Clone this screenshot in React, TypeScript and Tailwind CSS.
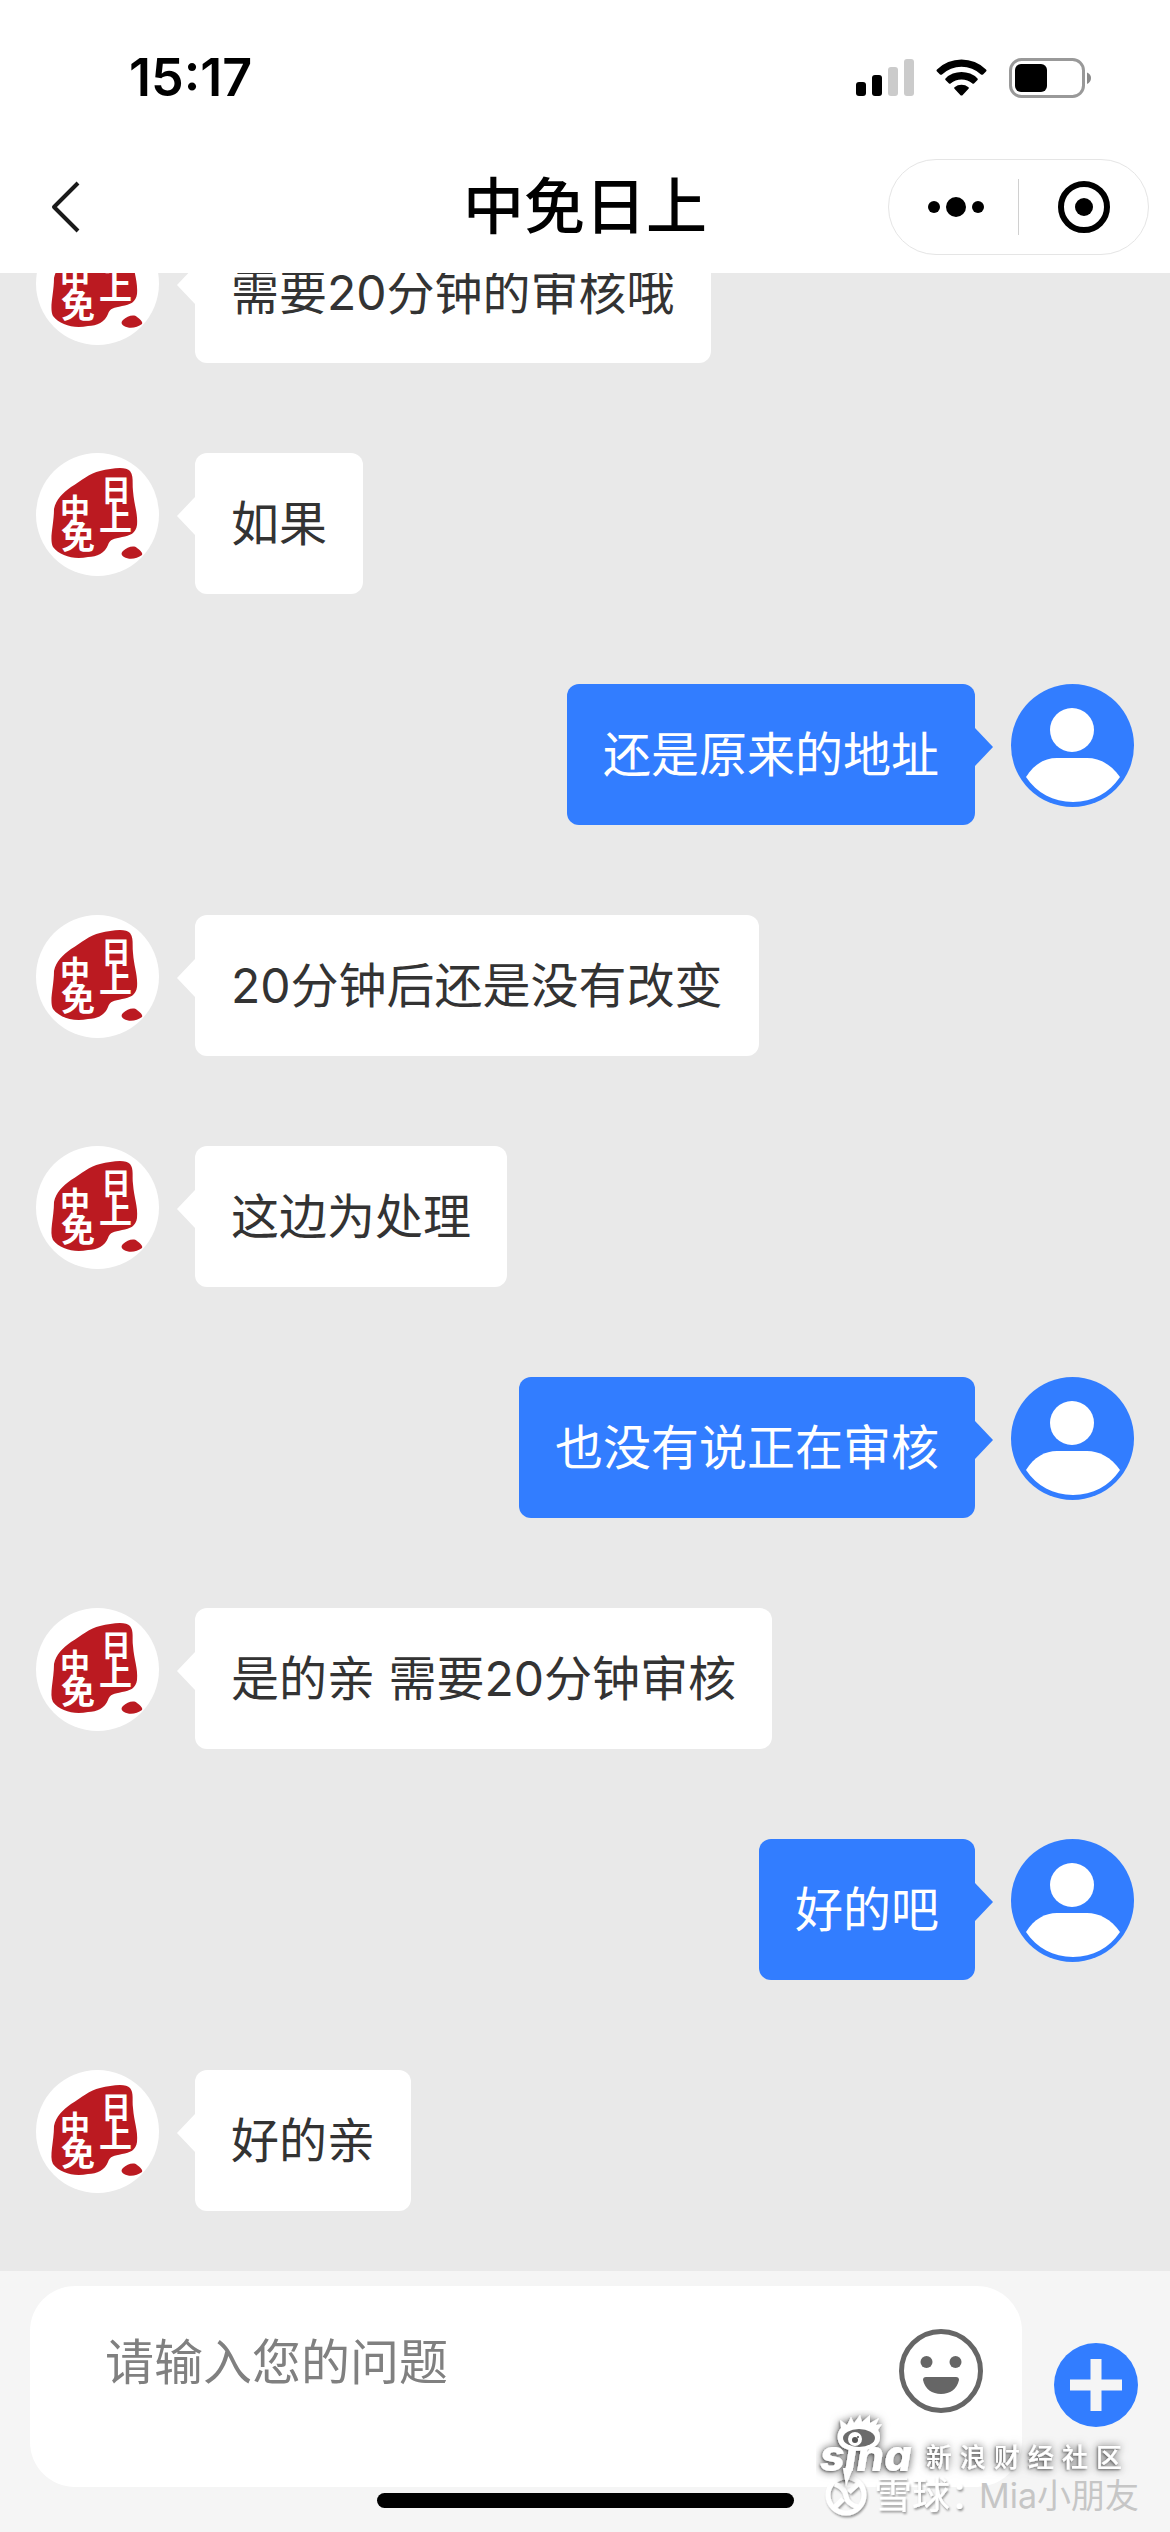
import { useState } from "react";

interface Message {
  id: number;
  from: "agent" | "user";
  text: string;
}

const messages: Message[] = [
  { id: 1, from: "agent", text: "需要20分钟的审核哦" },
  { id: 2, from: "agent", text: "如果" },
  { id: 3, from: "user", text: "还是原来的地址" },
  { id: 4, from: "agent", text: "20分钟后还是没有改变" },
  { id: 5, from: "agent", text: "这边为处理" },
  { id: 6, from: "user", text: "也没有说正在审核" },
  { id: 7, from: "agent", text: "是的亲 需要20分钟审核" },
  { id: 8, from: "user", text: "好的吧" },
  { id: 9, from: "agent", text: "好的亲" },
];

const StatusBar = () => (
  <div className="flex h-[141px] items-center justify-between pt-[14px] pr-[78px] pl-[129px]">
    <span className="text-[52px] leading-[60px] font-semibold">15:17</span>
    <div className="flex items-center gap-[22px]">
      <svg className="h-[38px] w-[58px]" viewBox="0 0 58 38">
        <rect x="0" y="23" width="10" height="14" rx="3" />
        <rect x="16" y="16" width="10" height="21" rx="3" />
        <rect x="32" y="8" width="10" height="29" rx="3" fill="#cbcbcb" />
        <rect x="48" y="0" width="10" height="37" rx="3" fill="#cbcbcb" />
      </svg>
      <svg className="h-[38px] w-[51px]" viewBox="0 0 51 38">
        <path d="M1 12.500Q0 11.500 1 10.500A35 35 0 0 1 50 10.500Q51 11.500 50 12.500L47 15.500Q46 16.200 45 15.500A28.500 28.500 0 0 0 6 15.500Q5 16.200 4 15.500Z" />
        <path d="M9.500 21Q8.800 20.200 9.500 19.400A23 23 0 0 1 41.500 19.400Q42.200 20.200 41.500 21L38 24.500Q37.200 25 36.400 24.500A16.500 16.500 0 0 0 14.600 24.500Q13.800 25 13 24.500Z" />
        <path d="M18.500 29.800Q17.600 29 18.500 28.200A11.500 11.500 0 0 1 32.500 28.200Q33.400 29 32.500 29.800L26.500 36.200Q25.500 37 24.500 36.200Z" />
      </svg>
      <svg className="h-10 w-[83px]" viewBox="0 0 83 40">
        <rect x="1.500" y="1.500" width="73" height="37" rx="11" fill="none" stroke="#999" strokeWidth="3" />
        <rect x="6" y="6" width="32" height="28" rx="6" />
        <path d="M78 14.500Q82 16 82 20T78 26Z" fill="#8a8a8a" />
      </svg>
    </div>
  </div>
);

const NavBar = () => (
  <div className="grid h-[132px] grid-cols-[1fr_auto_1fr] items-center px-[21px]">
    <button type="button" aria-label="返回" className="justify-self-start px-[29px]">
      <svg className="h-[52px] w-8" viewBox="0 0 32 52" fill="none" stroke="#1a1a1a" strokeWidth="4">
        <path d="M28 2L4 26L28 50" strokeLinejoin="round" />
      </svg>
    </button>
    <h1 className="text-[61px] leading-[72px] font-medium">中免日上</h1>
    <div className="flex h-24 w-[261px] items-center justify-self-end rounded-full border border-[#e5e5e5]">
      <button type="button" aria-label="更多" className="flex h-full flex-1 items-center justify-center">
        <svg className="h-5 w-[60px]" viewBox="0 0 60 20">
          <circle cx="10" cy="10" r="6" />
          <circle cx="32" cy="10" r="10" />
          <circle cx="54" cy="10" r="6" />
        </svg>
      </button>
      <span className="h-14 w-px bg-[#d0d0d0]" />
      <button type="button" aria-label="关闭" className="flex h-full flex-1 items-center justify-center">
        <svg className="h-[52px] w-[52px]" viewBox="0 0 52 52">
          <circle cx="26" cy="26" r="23" fill="none" stroke="#000" strokeWidth="6" />
          <circle cx="26" cy="26" r="9" />
        </svg>
      </button>
    </div>
  </div>
);

const ShopAvatar = () => (
  <svg className="h-[123px] w-[123px] shrink-0" viewBox="0 0 123 123">
    <circle cx="61.500" cy="61.500" r="61.500" fill="#fff" />
    <g fill="#bb1a21">
      <path d="M18 56C20 46 27 40 35 34C45 28 54 20 64 18C76 15 90 13 94 18C98 23 96 30 97 38C98 52 102 60 101 72C100 80 94 83 86 84C78 86 74 86 72 92C69 100 61 104 52 104C38 107 24 103 17 94C13 86 18 72 18 56Z" />
      <path d="M87 98C91 94 98 92 101 95C105 98 107 100 106 102C101 106 93 107 88 104C85 102 85 100 87 98Z" />
    </g>
    <g fill="#fff" fontWeight="700">
      <text x="65" y="48" fontSize="30">日</text>
      <text x="63" y="77" fontSize="33">上</text>
      <text x="24" y="67" fontSize="30">中</text>
      <text x="25" y="96" fontSize="34">免</text>
    </g>
  </svg>
);

const UserAvatar = () => (
  <svg className="h-[123px] w-[123px] shrink-0" viewBox="0 0 123 123">
    <circle cx="61.500" cy="61.500" r="61.500" fill="#327dff" />
    <g fill="#fff">
      <circle cx="61" cy="46" r="22" />
      <path d="M15 93C23 80 34 74 46 74H76C88 74 100 80 109 93C98 109 82 118 62 118C42 118 26 109 15 93Z" />
    </g>
  </svg>
);

const MessageRow = ({ message }: { message: Message }) => {
  if (message.from === "user") {
    return (
      <li className="flex shrink-0 items-start justify-end">
        <p className="rounded-[12px] bg-[#327dff] px-9 py-9 text-[48px] leading-[69px] text-white">{message.text}</p>
        <svg className="mt-11 mr-[18px] h-[38px] w-[18px]" viewBox="0 0 18 38" fill="#327dff">
          <path d="M0 0L18 19L0 38Z" />
        </svg>
        <UserAvatar />
      </li>
    );
  }

  return (
    <li className="flex shrink-0 items-start">
      <ShopAvatar />
      <svg className="mt-11 ml-[18px] h-[38px] w-[18px]" viewBox="0 0 18 38" fill="#fff">
        <path d="M18 0L0 19L18 38Z" />
      </svg>
      <p className="rounded-[12px] bg-white px-9 py-9 text-[48px] leading-[69px] text-[#333]">{message.text}</p>
    </li>
  );
};

const Composer = () => {
  const [draft, setDraft] = useState("");

  return (
    <form className="bg-[#f5f5f5] pt-[15px]" onSubmit={(e) => e.preventDefault()}>
      <div className="flex items-start gap-8 pr-8 pl-[30px]">
        <div className="flex h-[201px] flex-1 items-start rounded-[45px] bg-white pt-[42px] pr-[39px] pl-[75px]">
          <textarea
            aria-label="请输入您的问题"
            placeholder="请输入您的问题"
            value={draft}
            onChange={(e) => setDraft(e.target.value)}
            className="h-[120px] min-w-0 flex-1 resize-none text-[49px] leading-[69px] text-[#333] outline-none placeholder:text-[#808080]"
          />
          <button type="button" aria-label="表情">
            <svg className="h-[86px] w-[84px]" viewBox="0 0 84 86" fill="#666">
              <circle cx="42" cy="43" r="39.500" fill="none" stroke="#666" strokeWidth="5" />
              <circle cx="27.500" cy="34" r="6" />
              <circle cx="56.500" cy="34" r="6" />
              <path d="M27 49H57Q60 49 60 52C58 61 51 66 42 66S26 61 24 52Q24 49 27 49Z" />
            </svg>
          </button>
        </div>
        <button type="button" aria-label="更多功能" className="mt-[57px]">
          <svg className="h-[84px] w-[84px]" viewBox="0 0 84 84">
            <circle cx="42" cy="42" r="42" fill="#327dff" />
            <path d="M42 16V68M16 42H68" stroke="#f5f5f5" strokeWidth="11" />
          </svg>
        </button>
      </div>
      <div className="mx-auto mt-[6px] mb-6 h-[15px] w-[417px] rounded-full bg-black" />
    </form>
  );
};

const Watermark = () => (
  <div className="pointer-events-none absolute right-[28px] bottom-[10px]">
    <svg className="h-[112px] w-[326px]" viewBox="0 0 326 112" fill="#fff">
      <defs>
        <filter id="glow" x="-20%" y="-20%" width="140%" height="140%">
          <feDropShadow dx="0" dy="0" stdDeviation="4" floodColor="#000" floodOpacity="0.500" />
          <feDropShadow dx="-1" dy="1" stdDeviation="1" floodColor="#000" floodOpacity="0.500" />
        </filter>
        <filter id="edge" x="-20%" y="-20%" width="140%" height="140%">
          <feDropShadow dx="1" dy="2" stdDeviation="1" floodColor="#000" floodOpacity="0.400" />
        </filter>
      </defs>
      <g filter="url(#edge)">
        <circle cx="30" cy="85" r="18" fill="none" stroke="#fff" strokeWidth="5" />
        <path d="M19 74Q29 78 30 86T42 97M42 74L33 82M27 89L19 97" fill="none" stroke="#fff" strokeWidth="5" />
        <text x="58" y="98" fontSize="38">雪球：</text>
      </g>
      <text x="163" y="98" fontSize="34" fill="#c6c6c6">Mia小朋友</text>
      <g filter="url(#glow)">
        <path d="M25 36C20 30 21 22 25 18L24 10L31 15L35 7L38 13L44 5L46 12L54 5L54 13L63 8L60 15L66 14L62 20C66 27 64 34 57 38C47 42 32 42 25 36Z" />
        <text x="4" y="61" fontSize="43" fontWeight="800" fontStyle="italic">sina</text>
        <path d="M27 58H37L30 76Z" />
        <text x="110 144 178 212 246 280" y="57" fontSize="26" fontWeight="500">新浪财经社区</text>
      </g>
      <ellipse cx="43" cy="28" rx="16" ry="9" fill="#6b6b6b" />
      <circle cx="39" cy="29" r="7" />
      <circle cx="39" cy="30" r="3" fill="#555" />
      <circle cx="42" cy="27" r="1" fill="#555" />
    </svg>
  </div>
);

const App = () => (
  <div className="relative flex h-screen flex-col overflow-hidden bg-white font-['Inter','Noto_Sans_CJK_SC',sans-serif] text-black">
    <header className="shrink-0">
      <StatusBar />
      <NavBar />
    </header>
    <main className="flex min-h-0 flex-1 flex-col justify-end overflow-hidden bg-[#e9e9e9]">
      <ul className="flex flex-col gap-[90px] px-9 pb-[60px]">
        {messages.map((message) => (
          <MessageRow key={message.id} message={message} />
        ))}
      </ul>
    </main>
    <Composer />
    <Watermark />
  </div>
);

export default App;
